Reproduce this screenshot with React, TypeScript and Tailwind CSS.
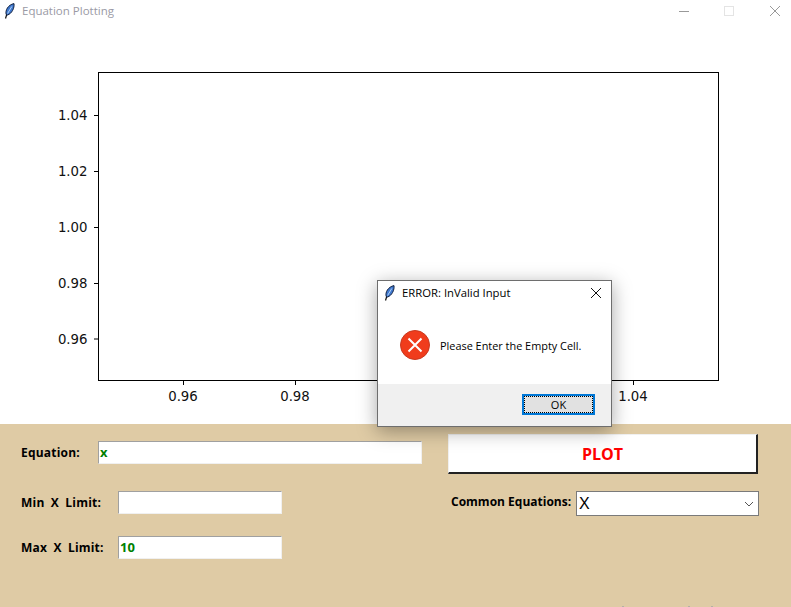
const ui = "font-['Comic_Sans_MS','Open_Sans',sans-serif] font-bold";

function Feather({ className }: { className: string }) {
  return (
    <svg viewBox="0 0 11 16" className={className}>
      <path d="M1.5 15.5 L3.5 9" stroke="#111" strokeWidth="1.2" fill="none" />
      <path d="M2.2 11.5 C1 7.5 4 1.8 10 0.6 C10.6 5 7.8 10.6 3.6 12 Z" fill="#3f78cf" stroke="#10203f" strokeWidth="1" />
      <path d="M3.6 10.5 L7.8 3.5" stroke="#b4d4f5" strokeWidth="1" fill="none" />
    </svg>
  );
}

function Chart() {
  const yTicks = [
    ["1.04", 115],
    ["1.02", 171],
    ["1.00", 227],
    ["0.98", 283],
    ["0.96", 338.5],
  ] as const;
  const xTicks = [
    ["0.96", 183],
    ["0.98", 295],
    ["1.00", 408],
    ["1.02", 520.5],
    ["1.04", 633],
  ] as const;
  return (
    <svg width="791" height="402" viewBox="0 22 791 402" className="block">
      <rect x="98.5" y="72.5" width="620" height="308" fill="white" stroke="black" strokeWidth="1" />
      {yTicks.map(([label, y]) => (
        <g key={label}>
          <line x1="94" x2="98" y1={y + 0.5} y2={y + 0.5} stroke="black" />
          <text x="87.5" y={y + 5} textAnchor="end" fontSize="13.3" fontFamily="'DejaVu Sans', sans-serif" fill="#111">{label}</text>
        </g>
      ))}
      {xTicks.map(([label, x]) => (
        <g key={label}>
          <line x1={x + 0.5} x2={x + 0.5} y1="381" y2="385" stroke="black" />
          <text x={x} y="401" textAnchor="middle" fontSize="13.3" fontFamily="'DejaVu Sans', sans-serif" fill="#111">{label}</text>
        </g>
      ))}
    </svg>
  );
}

function Field({ label, labelW, inputW, value, color = "text-[#008000]" }: { label: string; labelW: string; inputW: string; value: string; color?: string }) {
  return (
    <div className="flex items-center h-[23px]">
      <span className={`${ui} text-[12px] text-black whitespace-nowrap tracking-[0.2px] [word-spacing:3px] ${labelW}`}>{label}</span>
      <div className={`h-[23px] bg-white border-t border-l border-t-[#a0a0a0] border-l-[#a0a0a0] border-r border-b border-r-[#f0f0f0] border-b-[#f0f0f0] pl-[1px] flex items-center ${inputW}`}>
        <span className={`${ui} text-[13px] ${color}`}>{value}</span>
      </div>
    </div>
  );
}

export default function App() {
  return (
    <div className="relative w-[791px] h-[607px] overflow-hidden bg-white font-['Liberation_Sans',sans-serif]">
      <div className="h-[22px] flex items-center justify-between">
        <div className="flex items-center pl-[4px]">
          <Feather className="w-[11px] h-[16px]" />
          <span className="ml-[7px] text-[11.5px] text-[#9a9aa5] font-['Open_Sans',sans-serif]">Equation Plotting</span>
        </div>
        <div className="flex items-center text-[#999]">
          <svg width="131" height="22" viewBox="0 0 131 22" fill="none">
            <line x1="19" x2="29" y1="11.5" y2="11.5" stroke="#999" />
            <rect x="64.5" y="6.5" width="9" height="9" stroke="#e4e4e4" />
            <path d="M110 6 L120 16 M120 6 L110 16" stroke="#999" />
          </svg>
        </div>
      </div>

      <Chart />

      <div className="h-[183px] bg-[#dfcba5] flex">
        <div className="w-[448px] pl-[21px] pt-[17px] flex flex-col gap-[27px]">
          <Field label="Equation:" labelW="w-[77px]" inputW="w-[324px]" value="x" />
          <div className="flex flex-col gap-[22px]">
            <Field label="Min X Limit:" labelW="w-[97px]" inputW="w-[164px]" value="" />
            <Field label="Max X Limit:" labelW="w-[97px]" inputW="w-[164px]" value="10" />
          </div>
        </div>
        <div className="pt-[10px] flex flex-col">
          <div className={`w-[310px] h-[40px] bg-white border border-t-[#f0f0f0] border-l-[#f0f0f0] border-r-2 border-b-2 border-r-[#222] border-b-[#222] flex items-center justify-center ${ui} text-[16px] text-[#ff0000]`}>
            PLOT
          </div>
          <div className="mt-[17px] flex items-start h-[25px]">
            <span className={`${ui} text-[12px] leading-[22px] text-black w-[128px] pl-[3px] whitespace-nowrap`}>Common Equations:</span>
            <div className="w-[183px] h-[25px] bg-white border border-[#7a7a7a] flex items-center justify-between pl-[2px] pr-[4px]">
              <span className="font-['Liberation_Sans',sans-serif] text-[16px] text-black">X</span>
              <svg width="10" height="6" viewBox="0 0 10 6" fill="none"><path d="M1 1 L5 5 L9 1" stroke="#555" /></svg>
            </div>
          </div>
        </div>
      </div>

      <div className="absolute left-[622px] top-[606px] w-[2px] h-[1px] bg-[#b5b0a5]" />
      <div className="absolute left-[688px] top-[606px] w-[2px] h-[1px] bg-[#b5b0a5]" />
      <div className="absolute left-[711px] top-[606px] w-[2px] h-[1px] bg-[#b5b0a5]" />

      <div className="absolute left-[377px] top-[280px] w-[235px] h-[147px] bg-white border border-[#6e6e6e] shadow-[0_4px_18px_rgba(0,0,0,0.35)] flex flex-col">
        <div className="h-[24px] flex items-center justify-between pl-[6px] pr-[9px]">
          <div className="flex items-center">
            <Feather className="w-[11px] h-[16px]" />
            <span className="ml-[7px] text-[11.3px] text-black font-['Open_Sans',sans-serif]">ERROR: InValid Input</span>
          </div>
          <svg width="12" height="12" viewBox="0 0 12 12" fill="none"><path d="M1 1 L11 11 M11 1 L1 11" stroke="#111" /></svg>
        </div>
        <div className="flex-1 flex items-center pl-[22px]">
          <svg width="30" height="30" viewBox="0 0 30 30" fill="none">
            <circle cx="15" cy="15" r="14.5" fill="#f03c1c" stroke="#c9391f" />
            <path d="M8.5 8.5 L21.5 21.5 M21.5 8.5 L8.5 21.5" stroke="white" strokeWidth="2" />
          </svg>
          <span className="ml-[10px] pt-[3px] text-[10.9px] text-black font-['Open_Sans',sans-serif] whitespace-nowrap">Please Enter the Empty Cell.</span>
        </div>
        <div className="h-[42px] bg-[#f0f0f0] flex justify-end pt-[10px] pr-[16px]">
          <div className="w-[73px] h-[21px] border-2 border-[#0078d7] bg-[#e1e1e1] flex items-center justify-center">
            <div className="w-full h-full border border-dotted border-black flex items-center justify-center text-[11px] pt-[2px] text-black font-['Open_Sans',sans-serif]">OK</div>
          </div>
        </div>
      </div>
    </div>
  );
}
